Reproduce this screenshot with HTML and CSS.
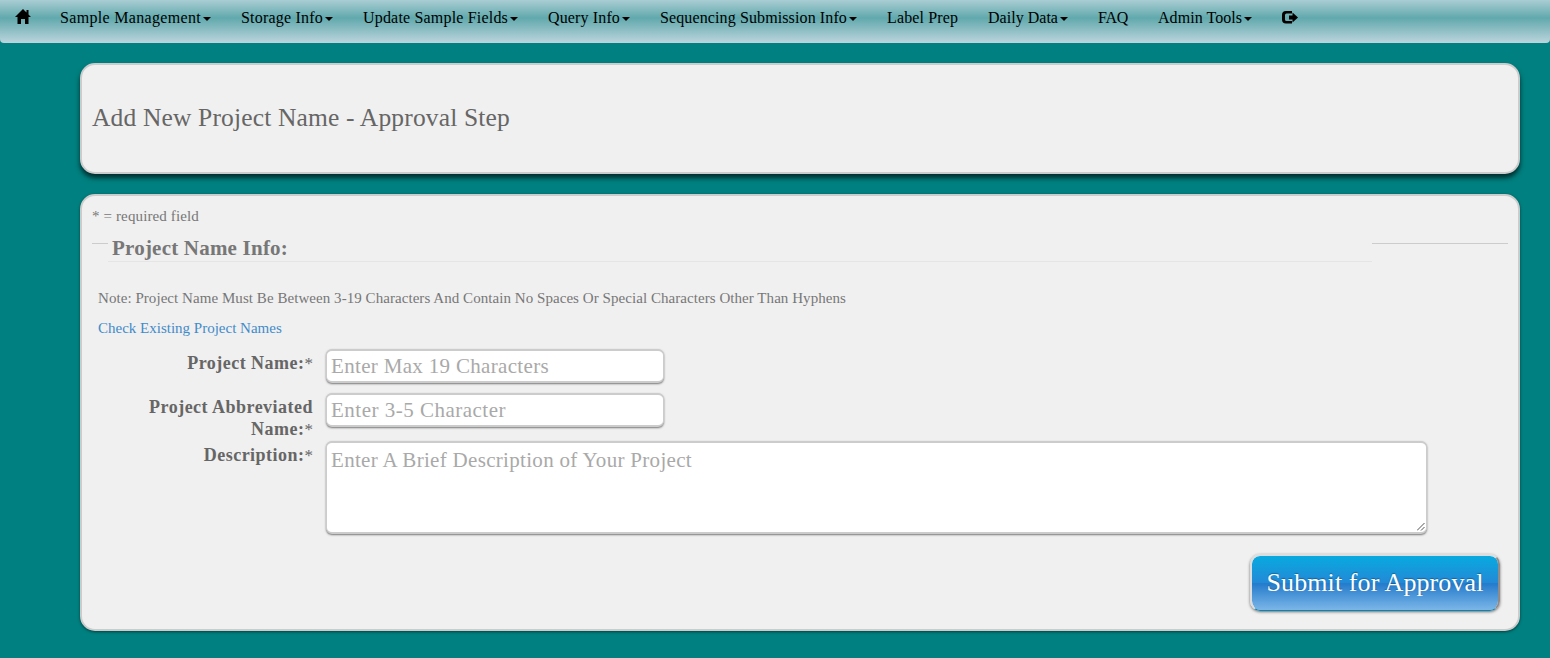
FILE: index.html
```
<!DOCTYPE html>
<html lang="en">
<head>
<meta charset="utf-8">
<title>Add New Project Name</title>
<link rel="stylesheet" href="styles.css">
</head>
<body>
<nav class="navbar">
  <a class="nav-item home" href="#"><svg class="icon" viewBox="0 0 16 16"><path d="M8 1 0 9h2.500v7H6v-5h4v5h3.500V9H16l-2.500-2.500V2h-2v2.500z"/></svg></a>
  <a class="nav-item n1" href="#"><span>Sample Management</span><i class="caret"></i></a>
  <a class="nav-item n2" href="#"><span>Storage Info</span><i class="caret"></i></a>
  <a class="nav-item n3" href="#"><span>Update Sample Fields</span><i class="caret"></i></a>
  <a class="nav-item n4" href="#"><span>Query Info</span><i class="caret"></i></a>
  <a class="nav-item n5" href="#"><span>Sequencing Submission Info</span><i class="caret"></i></a>
  <a class="nav-item n6" href="#"><span>Label Prep</span></a>
  <a class="nav-item n7" href="#"><span>Daily Data</span><i class="caret"></i></a>
  <a class="nav-item n8" href="#"><span>FAQ</span></a>
  <a class="nav-item n9" href="#"><span>Admin Tools</span><i class="caret"></i></a>
  <a class="nav-item logout" href="#"><svg class="icon" viewBox="0 0 16 16"><path d="M10 3H4Q0 3 0 7v4.500q0 4 4 4h6V13H4.500Q3 13 3 11.500V7q0-1.500 1.500-1.500H10zM10.500 4.500v3H7v4h3.500v3L16 9.500z"/></svg></a>
</nav>
<main class="page">
  <section class="panel heading"><h1>Add New Project Name - Approval Step</h1></section>
  <section class="panel form-panel">
    <p class="required">* = required field</p>
    <div class="legend"><i class="line-left"></i><h2>Project Name Info:</h2><i class="line-right"></i></div>
    <p class="note">Note: Project Name Must Be Between 3-19 Characters And Contain No Spaces Or Special Characters Other Than Hyphens</p>
    <a class="check" href="#">Check Existing Project Names</a>
    <div class="row r1"><label>Project Name:<b>*</b></label><div class="field f1">Enter Max 19 Characters</div></div>
    <div class="row r2"><label>Project Abbreviated<br>Name:<b>*</b></label><div class="field f2">Enter 3-5 Character</div></div>
    <div class="row r3"><label>Description:<b>*</b></label><div class="field area">Enter A Brief Description of Your Project<svg class="grip" viewBox="0 0 8 8"><path d="M0 7.500 7.500 0M4 7.500 7.500 4"/></svg></div></div>
    <button class="submit">Submit for Approval</button>
  </section>
</main>
</body>
</html>
```
FILE: styles.css
```
* { box-sizing: border-box; }
body { margin: 0; height: 658px; overflow: hidden; background: #008080; color: #666; font-family: "Liberation Serif", serif; }
.navbar { display: flex; height: 43px; border-radius: 0 0 4px 4px; background: linear-gradient(#a9cdd3 0, #61a9ad 18px, #bcd5dd 43px); }
.nav-item { display: flex; flex: none; padding: 8px 15px 0; color: #000; font-size: 16px; line-height: 20px; text-decoration: none; white-space: nowrap; }
.home { width: 45px; }
.n1 { width: 181px; letter-spacing: .323px; }
.n2 { width: 122px; letter-spacing: .206px; }
.n3 { width: 185px; letter-spacing: .184px; }
.n4 { width: 112px; letter-spacing: .136px; }
.n5 { width: 227px; letter-spacing: .115px; }
.n6 { width: 101px; letter-spacing: .125px; }
.n7 { width: 110px; letter-spacing: .025px; }
.n8 { width: 60px; letter-spacing: -.276px; }
.n9 { width: 124px; letter-spacing: .047px; }
.icon { flex: none; width: 16px; height: 16px; }
.caret { margin: 9px 0 0 auto; height: 4px; border: 4px solid transparent; border-top-color: #000; border-bottom: 0; }
.page { padding: 20px 30px 0 80px; }
.panel { border: 2px solid #ccc; border-radius: 15px; background: #f0f0f0; }
.heading { height: 111px; margin-bottom: 20px; padding: 38px 10px; box-shadow: 0 4px 5px rgba(0,0,0,.65); }
h1 { margin: 0; font-size: 25.500px; font-weight: 400; line-height: 30px; letter-spacing: .162px; }
.form-panel { display: flex; flex-direction: column; height: 437px; padding: 10px; box-shadow: 0 1px 3px rgba(0,0,0,.5); }
p { margin: 0; font-size: 15px; line-height: 20px; color: #777; }
.required { letter-spacing: .129px; }
.legend { display: grid; grid-template-columns: 16px 1fr 136px; height: 40px; margin-top: 5px; }
.line-left, .line-right { height: 1px; margin-top: 12px; background: #ccc; }
h2 { margin: 3px 0 0; height: 28px; padding-left: 4px; border-bottom: 1px solid #e5e5e5; color: #777; font-size: 21px; line-height: 28px; letter-spacing: .21px; }
.note { margin: 17px 0 0 6px; white-space: nowrap; letter-spacing: .056px; }
.check { align-self: flex-start; margin: 10px 0 0 6px; color: #428bca; font-size: 15px; line-height: 20px; text-decoration: none; }
.row { display: grid; grid-template-columns: 221px 1fr; column-gap: 13px; }
label { padding-top: 3px; font-size: 18px; font-weight: 700; line-height: 22px; text-align: right; letter-spacing: .48px; }
label b { font-weight: 400; font-size: 17px; letter-spacing: 0; }
.r1 { height: 44px; margin-top: 11px; }
.r2 { height: 48px; }
.field { width: 338px; height: 34px; padding: 0 4px; border: 2px solid #ccc; border-width: 2px 1px 2px 1px; border-radius: 6px; background: #fff; box-shadow: 0 1px 2px rgba(0,0,0,.5); color: #a9a9a9; font-size: 21px; line-height: 30px; letter-spacing: .325px; }
.f2 { letter-spacing: .495px; }
.area { position: relative; width: 1101px; height: 93px; padding-top: 2px; letter-spacing: .312px; }
.grip { position: absolute; right: 1px; bottom: 1px; width: 8px; height: 8px; fill: none; stroke: #555; }
.submit { align-self: flex-end; width: 250px; height: 57px; margin: 20px 8px 0 0; padding: 0; border: 2px solid; border-color: #ddd #908b8b #0785b5 #ddd; border-bottom-width: 1px; border-radius: 10px; background: linear-gradient(#08aae0, #2389d7 50%, #247bcb 51%, #7bb6e8) padding-box; box-shadow: 0 1px 3px rgba(0,0,0,.55); color: #fff; font: 26px "Liberation Serif", serif; letter-spacing: .09px; text-shadow: 0 -1px 1px rgba(0,0,0,.3); white-space: nowrap; }
```
